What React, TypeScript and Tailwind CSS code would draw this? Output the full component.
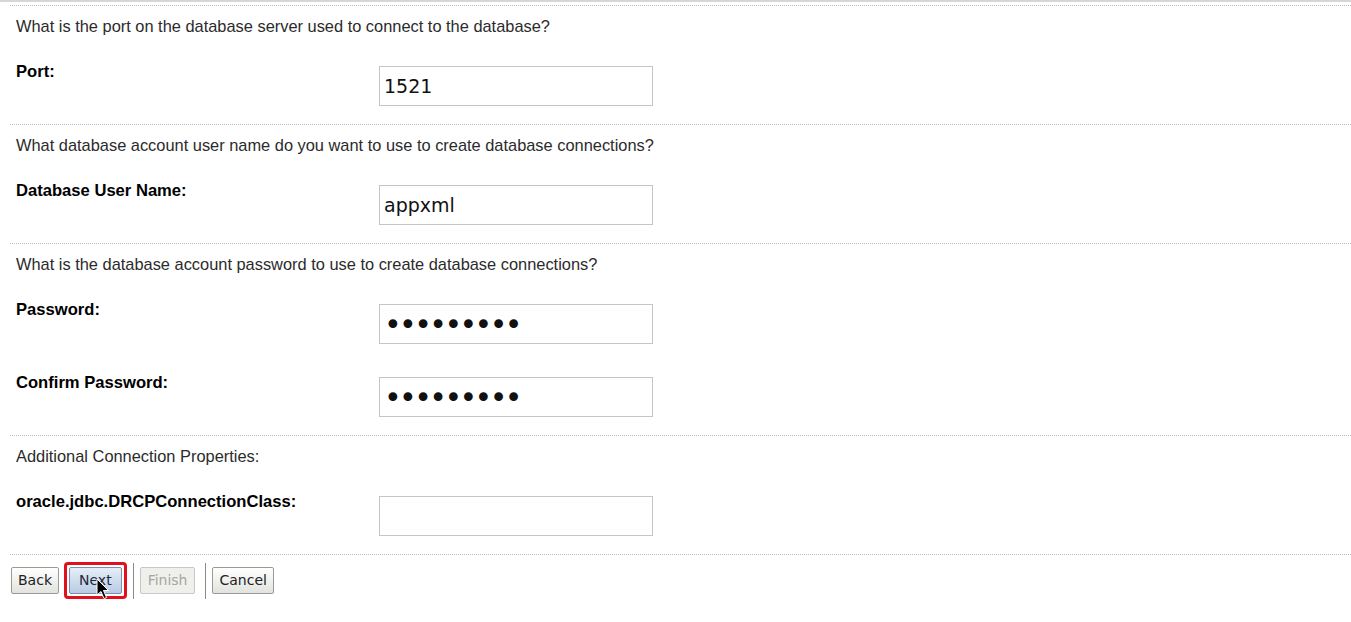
import React from "react";

type Field = { label: string; value?: string; password?: boolean };
type Section = { question: string; fields: Field[] };

const sections: Section[] = [
  {
    question: "What is the port on the database server used to connect to the database?",
    fields: [{ label: "Port:", value: "1521" }],
  },
  {
    question: "What database account user name do you want to use to create database connections?",
    fields: [{ label: "Database User Name:", value: "appxml" }],
  },
  {
    question: "What is the database account password to use to create database connections?",
    fields: [
      { label: "Password:", value: "secretpwd", password: true },
      { label: "Confirm Password:", value: "secretpwd", password: true },
    ],
  },
  {
    question: "Additional Connection Properties:",
    fields: [{ label: "oracle.jdbc.DRCPConnectionClass:", value: "" }],
  },
];

function Row({ field }: { field: Field }) {
  return (
    <div className="flex items-start">
      <div className="w-[363px] text-[16.6px] leading-[18px] font-bold text-black">{field.label}</div>
      <input
        type={field.password ? "password" : "text"}
        defaultValue={field.value}
        readOnly
        className={`mt-[3px] h-[40px] w-[274px] border border-[#c6c6c0] bg-white px-[4px] font-['DejaVu_Sans',sans-serif] text-[#111] outline-none ${
          field.password ? "text-[30px] tracking-[-2.6px]" : "text-[19px]"
        }`}
      />
    </div>
  );
}

function Btn({
  children,
  variant = "normal",
  pad = "px-[6px]",
}: {
  children: React.ReactNode;
  variant?: "normal" | "primary" | "disabled";
  pad?: string;
}) {
  const styles = {
    normal: "border-[#9a9a96] bg-gradient-to-b from-white to-[#e2e2de] text-[#222]",
    primary: "border-[#7d8ea6] bg-gradient-to-b from-[#e6eef8] to-[#b9cbe3] text-[#1c2a3c]",
    disabled: "border-[#c8c8c4] bg-[#efefec] text-[#a6a6a2]",
  }[variant];
  return (
    <button
      className={`h-[27px] rounded-[2px] border font-['DejaVu_Sans',sans-serif] text-[14px] leading-[25px] ${pad} ${styles}`}
    >
      {children}
    </button>
  );
}

function Cursor() {
  return (
    <svg className="pointer-events-none absolute left-[29px] top-[13px]" width="14" height="24" viewBox="0 0 14 24">
      <path
        d="M1 1 L1 17 L5 13.5 L8 20.5 L10.5 19.5 L7.5 12.5 L12.5 12.5 Z"
        fill="#000"
        stroke="#fff"
        strokeWidth="1"
        strokeLinejoin="round"
      />
    </svg>
  );
}

export default function App() {
  return (
    <div className="h-[622px] w-[1351px] overflow-hidden bg-white font-['Liberation_Sans',Arial,sans-serif]">
      <div className="h-[2px] bg-[#d6d6d2]" />
      <div className="ml-[10px] mt-[3px]">
        {sections.map((s) => (
          <div key={s.question} className="border-t border-dotted border-[#bdbdb8] pb-[18px] pl-[6px] pt-[10px]">
            <div className="text-[16.4px] leading-[20px] text-[#2b2b2b]">{s.question}</div>
            <div className="mt-[27px] flex flex-col gap-[30px]">
              {s.fields.map((f) => (
                <Row key={f.label} field={f} />
              ))}
            </div>
          </div>
        ))}
        <div className="flex items-center border-t border-dotted border-[#bdbdb8] pt-[7px]">
          <div className="ml-[1px]">
            <Btn>Back</Btn>
          </div>
          <div className="relative ml-[5px] rounded-[4px] border-[3px] border-[#e0101c] p-[2px]">
            <Btn variant="primary" pad="px-[9px]">
              Next
            </Btn>
            <Cursor />
          </div>
          <div className="ml-[6px] mr-[6px] h-[36px] w-px bg-[#8a8a86]" />
          <Btn variant="disabled" pad="px-[7px]">
            Finish
          </Btn>
          <div className="ml-[10px] mr-[6px] h-[36px] w-px bg-[#8a8a86]" />
          <Btn>Cancel</Btn>
        </div>
      </div>
    </div>
  );
}
